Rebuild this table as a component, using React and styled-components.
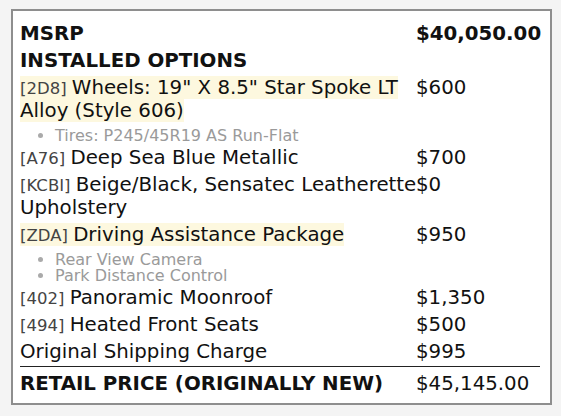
import React from "react";
import styled, { createGlobalStyle } from "styled-components";

const Global = createGlobalStyle`
  html, body { margin: 0; padding: 0; background: #f4f4f4; }
  body { font-family: "DejaVu Sans", sans-serif; color: #111; }
`;

const Page = styled.div`
  padding: 9px 9px 0 11px;
`;

const Box = styled.div`
  box-sizing: border-box;
  width: 541px;
  height: 396px;
  background: #fff;
  border: 2px solid #8e8e8e;
  padding: 9px 10px 0 7px;
`;

const Sheet = styled.div`
  display: grid;
  grid-template-columns: 396px 124px;
`;

const Cell = styled.div`
  padding: 2px 0;
  font-size: 19.8px;
  line-height: 23px;
  font-weight: ${(p) => (p.$bold ? 700 : 400)};
  min-width: 0;
  white-space: ${(p) => (p.$nowrap ? "nowrap" : "normal")};
  ${(p) =>
    p.$top
      ? "border-top: 1px solid #222; margin-top: 1px; padding-top: 5px;"
      : ""}
`;

const Wrap = styled.div`
  width: 412px;
`;

const Hl = styled.span`
  background: ${(p) => (p.$on ? "#fdf8df" : "transparent")};
`;

const Code = styled.span`
  font-size: 16.5px;
  line-height: 1;
  color: #444;
`;

const Subs = styled.ul`
  margin: 0 0 -2px;
  padding: 6px 0 0 35px;
  list-style: disc;
  font-size: 16px;
  line-height: 16px;
  color: #9a9a9a;
  li::marker { color: #aaa; }
`;

const items = [
  { code: "2D8", name: 'Wheels: 19" X 8.5" Star Spoke LT Alloy (Style 606)', price: "$600", hl: true, subs: ["Tires: P245/45R19 AS Run-Flat"] },
  { code: "A76", name: "Deep Sea Blue Metallic", price: "$700" },
  { code: "KCBI", name: "Beige/Black, Sensatec Leatherette Upholstery", price: "$0" },
  { code: "ZDA", name: "Driving Assistance Package", price: "$950", hl: true, subs: ["Rear View Camera", "Park Distance Control"] },
  { code: "402", name: "Panoramic Moonroof", price: "$1,350" },
  { code: "494", name: "Heated Front Seats", price: "$500" },
  { name: "Original Shipping Charge", price: "$995" },
];

export default function App() {
  return (
    <>
      <Global />
      <Page>
        <Box>
          <Sheet>
            <Cell $bold>MSRP</Cell>
            <Cell $bold $nowrap>$40,050.00</Cell>
            <Cell $bold>INSTALLED OPTIONS</Cell>
            <Cell />
            {items.map((it, i) => (
              <React.Fragment key={i}>
                <Cell>
                  <Wrap>
                    <Hl $on={it.hl}>
                      {it.code && <Code>[{it.code}] </Code>}
                      {it.name}
                    </Hl>
                  </Wrap>
                  {it.subs && (
                    <Subs>
                      {it.subs.map((s) => (
                        <li key={s}>{s}</li>
                      ))}
                    </Subs>
                  )}
                </Cell>
                <Cell $nowrap>{it.price}</Cell>
              </React.Fragment>
            ))}
            <Cell $bold $top $nowrap>RETAIL PRICE (ORIGINALLY NEW)</Cell>
            <Cell $top $nowrap>$45,145.00</Cell>
          </Sheet>
        </Box>
      </Page>
    </>
  );
}
